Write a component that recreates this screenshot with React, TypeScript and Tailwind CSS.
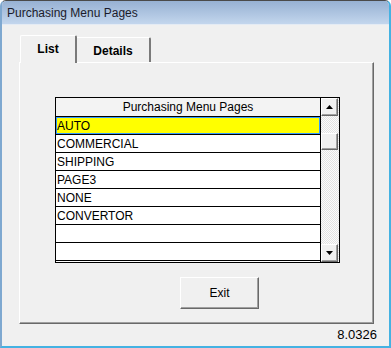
const rows = ["AUTO", "COMMERCIAL", "SHIPPING", "PAGE3", "NONE", "CONVERTOR", "", ""];

const font = { fontFamily: '"Liberation Sans", Arial, sans-serif' };

function Arrow({ down }: { down?: boolean }) {
  return (
    <svg width="7" height="4" viewBox="0 0 7 4">
      <polygon points={down ? "0,0 7,0 3.5,4" : "0,4 7,4 3.5,0"} fill="#000" />
    </svg>
  );
}

function ScrollButton({ down }: { down?: boolean }) {
  return (
    <div className="w-[17px] h-[18px] bg-[#f0f0f0] border-t border-l border-t-white border-l-white border-r border-b border-r-[#696969] border-b-[#696969] shadow-[inset_-1px_-1px_0_#a0a0a0] flex items-center justify-center">
      <Arrow down={down} />
    </div>
  );
}

export default function App() {
  return (
    <div
      className="w-[391px] h-[348px] bg-[#f0f0f0] border-l-2 border-l-[#7ea8d0] border-r-2 border-r-[#44b2e2] border-b-2 border-b-[#44b2e2] border-t border-t-[#4a4a4a] rounded-t-[6px] overflow-hidden flex flex-col text-black"
      style={font}
    >
      {/* Title bar */}
      <div className="h-[24px] shrink-0 bg-gradient-to-b from-[#97b1d3] to-[#c3d6ed] border-b border-b-[#e4ebf4] flex items-center pl-[5px] pt-[1px] text-[12px] text-[#1b1b2b]">
        Purchasing Menu Pages
      </div>

      {/* Tabs */}
      <div className="pt-[10px] pl-[18px] flex items-end h-[37px] shrink-0">
        <div className="relative z-10 w-[57px] h-[28px] -mb-[1px] bg-[#f0f0f0] border-t border-l border-t-white border-l-white border-r-2 border-r-[#7a7a7a] rounded-t-[2px] flex items-center justify-center text-[12px] font-bold pb-[2px]">
          List
        </div>
        <div className="w-[74px] h-[25px] bg-[#f0f0f0] border-t border-t-white border-r-2 border-r-[#7a7a7a] rounded-tr-[2px] flex items-center justify-center text-[12px] font-bold pt-[1px]">
          Details
        </div>
      </div>

      {/* Tab panel */}
      <div className="ml-[17px] w-[355px] h-[262px] shrink-0 border-t border-l border-t-white border-l-white border-r border-b border-r-[#696969] border-b-[#696969] shadow-[inset_-1px_-1px_0_#a0a0a0] flex flex-col">
        <div className="ml-[35px] mt-[34px] w-[285px] h-[166px] border border-black bg-white flex">
          <div className="w-[264px] flex flex-col">
            <div className="h-[19px] bg-[#f3f3f3] border-b border-b-black flex items-center justify-center text-[12px]">
              Purchasing Menu Pages
            </div>
            {rows.map((r, i) => (
              <div key={i} className="h-[18px] border-b border-b-black">
                <div
                  className={
                    i === 0
                      ? "h-[17px] bg-[#ffff00] border border-[#3399ff] flex items-center pl-[0px] text-[12px]"
                      : "h-[17px] flex items-center pl-[1px] text-[12px]"
                  }
                >
                  {r}
                </div>
              </div>
            ))}
          </div>
          <div className="w-[19px] border-l border-l-black flex flex-col bg-[image:repeating-conic-gradient(#e2e2e2_0%_25%,#fbfbfb_0%_50%)] bg-[length:2px_2px]">
            <ScrollButton />
            <div className="h-[17px]" />
            <div className="w-[17px] h-[17px] bg-[#f0f0f0] border-t border-l border-t-white border-l-white border-r border-b border-r-[#696969] border-b-[#696969] shadow-[inset_-1px_-1px_0_#a0a0a0]" />
            <div className="flex-1" />
            <ScrollButton down />
          </div>
        </div>

        <button className="ml-[160px] mt-[14px] w-[79px] h-[32px] bg-[#f0f0f0] border-t border-l border-t-white border-l-white border-r border-b border-r-[#696969] border-b-[#696969] shadow-[inset_-1px_-1px_0_#a0a0a0] flex items-center justify-center text-[12px] pb-[1px]">
          Exit
        </button>
      </div>

      <div className="mt-[3px] pr-[12px] text-right text-[13px] leading-[15px]">8.0326</div>
    </div>
  );
}
